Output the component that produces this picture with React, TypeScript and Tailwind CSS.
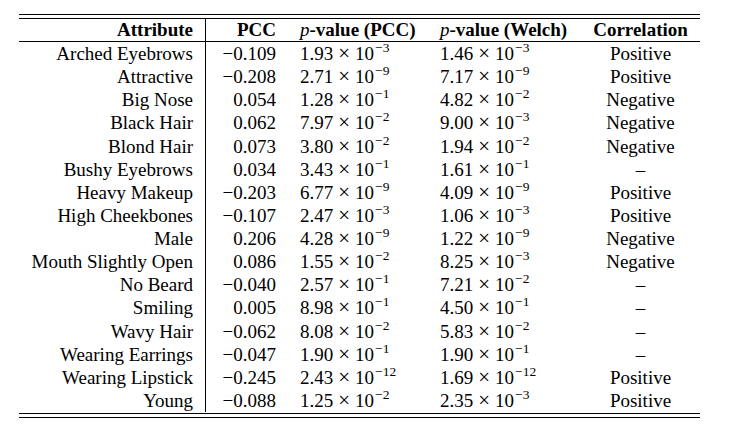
const rows: [string, string, string, string, string, string, string][] = [
  ['Arched Eyebrows', '−0.109', '1.93', '3', '1.46', '3', 'Positive'],
  ['Attractive', '−0.208', '2.71', '9', '7.17', '9', 'Positive'],
  ['Big Nose', '0.054', '1.28', '1', '4.82', '2', 'Negative'],
  ['Black Hair', '0.062', '7.97', '2', '9.00', '3', 'Negative'],
  ['Blond Hair', '0.073', '3.80', '2', '1.94', '2', 'Negative'],
  ['Bushy Eyebrows', '0.034', '3.43', '1', '1.61', '1', '–'],
  ['Heavy Makeup', '−0.203', '6.77', '9', '4.09', '9', 'Positive'],
  ['High Cheekbones', '−0.107', '2.47', '3', '1.06', '3', 'Positive'],
  ['Male', '0.206', '4.28', '9', '1.22', '9', 'Negative'],
  ['Mouth Slightly Open', '0.086', '1.55', '2', '8.25', '3', 'Negative'],
  ['No Beard', '−0.040', '2.57', '1', '7.21', '2', '–'],
  ['Smiling', '0.005', '8.98', '1', '4.50', '1', '–'],
  ['Wavy Hair', '−0.062', '8.08', '2', '5.83', '2', '–'],
  ['Wearing Earrings', '−0.047', '1.90', '1', '1.90', '1', '–'],
  ['Wearing Lipstick', '−0.245', '2.43', '12', '1.69', '12', 'Positive'],
  ['Young', '−0.088', '1.25', '2', '2.35', '3', 'Positive'],
];

function Sci({ m, e }: { m: string; e: string }) {
  return (
    <span className="whitespace-nowrap">
      {m}
      <span className="mx-[5px] text-[21px]">×</span>
      10
      <span className="relative -top-[8px] ml-[1px] text-[13.5px] leading-none">−{e}</span>
    </span>
  );
}

const cell = 'px-3 h-[23.13px] leading-[23.13px] whitespace-nowrap';

export default function App() {
  return (
    <div className="w-[734px] h-[429px] bg-white text-black font-['Liberation_Serif',serif] text-[19px] pt-[14px] pl-[19px]">
      <div className="w-[681px]">
        {/* top double rule */}
        <div className="h-[1px] bg-black" />
        <div className="mt-[3px] h-[1px] bg-black" />

        <div className="grid grid-cols-[187px_82px_140px_153px_119px]">
          {/* header */}
          <div className="px-3 h-[23px] leading-[22px] text-right font-bold border-r border-b border-black">Attribute</div>
          <div className="px-3 h-[23px] leading-[22px] text-right font-bold border-b border-black">PCC</div>
          <div className="px-3 h-[23px] leading-[22px] font-bold border-b border-black whitespace-nowrap">
            <span className="italic font-normal">p</span>-value (PCC)
          </div>
          <div className="px-3 h-[23px] leading-[22px] font-bold border-b border-black whitespace-nowrap">
            <span className="italic font-normal">p</span>-value (Welch)
          </div>
          <div className="px-3 h-[23px] leading-[22px] text-center font-bold border-b border-black">Correlation</div>

          {rows.map(r => (
            <div key={r[0]} className="contents">
              <div className={cell + ' text-right border-r border-black'}>{r[0]}</div>
              <div className={cell + ' text-right'}>{r[1]}</div>
              <div className={cell}>
                <Sci m={r[2]} e={r[3]} />
              </div>
              <div className={cell}>
                <Sci m={r[4]} e={r[5]} />
              </div>
              <div className={cell + ' text-center'}>{r[6]}</div>
            </div>
          ))}
        </div>

        {/* bottom double rule */}
        <div className="mt-[1px] h-[1px] bg-black" />
        <div className="mt-[3px] h-[1px] bg-black" />
      </div>
    </div>
  );
}
